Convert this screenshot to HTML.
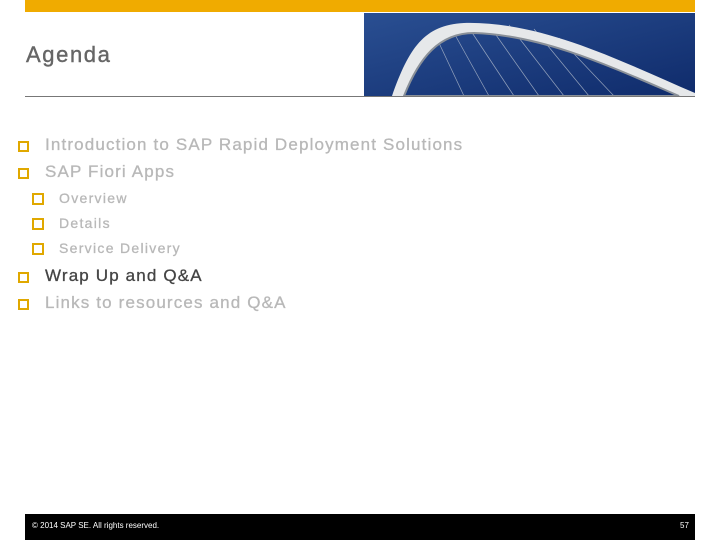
<!DOCTYPE html>
<html><head><meta charset="utf-8"><style>
body{margin:0;width:720px;height:540px;background:#fff;position:relative;overflow:hidden;font-family:"Liberation Sans",Arial,sans-serif}
.a{position:absolute}
.t{position:absolute;white-space:nowrap}
.b{position:absolute;width:7px;height:7px;border:2px solid #e0a800;background:#fff}
.bs{width:8px;height:8px}
.m{font-size:17px;color:#b8b8b8;letter-spacing:1.15px;-webkit-text-stroke:0.3px #b8b8b8}
.s{font-size:14px;color:#b8b8b8;letter-spacing:1.3px;-webkit-text-stroke:0.3px #b8b8b8}
</style></head><body>
<div class="a" style="left:25px;top:0;width:670px;height:12px;background:#f0ab00"></div>
<div class="t" style="left:26px;top:42px;font-size:22px;color:#666;letter-spacing:1.6px;-webkit-text-stroke:0.4px #666">Agenda</div>
<svg class="a" style="left:364px;top:13px" width="331" height="83" viewBox="0 0 331 83">
<defs><linearGradient id="g" x1="0" y1="0" x2="1" y2="1"><stop offset="0" stop-color="#2a4f92"/><stop offset="1" stop-color="#0f2b6b"/></linearGradient></defs>
<rect width="331" height="83" fill="url(#g)"/>
<g stroke="#c8cfd8" stroke-width="0.7" opacity="0.7">
<line x1="75" y1="30" x2="100" y2="83"/><line x1="90" y1="20" x2="125" y2="83"/><line x1="105" y1="15" x2="150" y2="83"/><line x1="125" y1="12" x2="175" y2="83"/><line x1="145" y1="12" x2="200" y2="83"/><line x1="170" y1="16" x2="225" y2="83"/><line x1="195" y1="25" x2="250" y2="83"/>
</g>
<path d="M28 83 C45 35 60 12 100 10 C180 8 260 50 331 80 L331 83 L315 83 C250 55 180 22 110 20 C75 20 55 45 40 83 Z" fill="#e6e8ea"/>
<path d="M40 83 C55 45 75 20 110 20 C180 22 250 55 315 83 Z" fill="none" stroke="#8a9098" stroke-width="2"/>
</svg>
<div class="a" style="left:25px;top:96px;width:670px;height:1px;background:#777"></div>

<div class="b" style="left:18px;top:141px"></div><div class="t m" style="left:45px;top:135px">Introduction to SAP Rapid Deployment Solutions</div>
<div class="b" style="left:18px;top:168px"></div><div class="t m" style="left:45px;top:162px">SAP Fiori Apps</div>
<div class="b bs" style="left:32px;top:193px"></div><div class="t s" style="left:59px;top:190px">Overview</div>
<div class="b bs" style="left:32px;top:218px"></div><div class="t s" style="left:59px;top:215px">Details</div>
<div class="b bs" style="left:32px;top:243px"></div><div class="t s" style="left:59px;top:240px">Service Delivery</div>
<div class="b" style="left:18px;top:272px"></div><div class="t m" style="left:45px;top:266px;color:#444;-webkit-text-stroke:0.3px #444">Wrap Up and Q&amp;A</div>
<div class="b" style="left:18px;top:299px"></div><div class="t m" style="left:45px;top:293px">Links to resources and Q&amp;A</div>

<div class="a" style="left:25px;top:514px;width:670px;height:26px;background:#000"></div>
<div class="t" style="left:32px;top:521px;font-size:8px;color:#fff">© 2014 SAP SE. All rights reserved.</div>
<div class="t" style="left:680px;top:521px;font-size:8px;color:#fff">57</div>
</body></html>
